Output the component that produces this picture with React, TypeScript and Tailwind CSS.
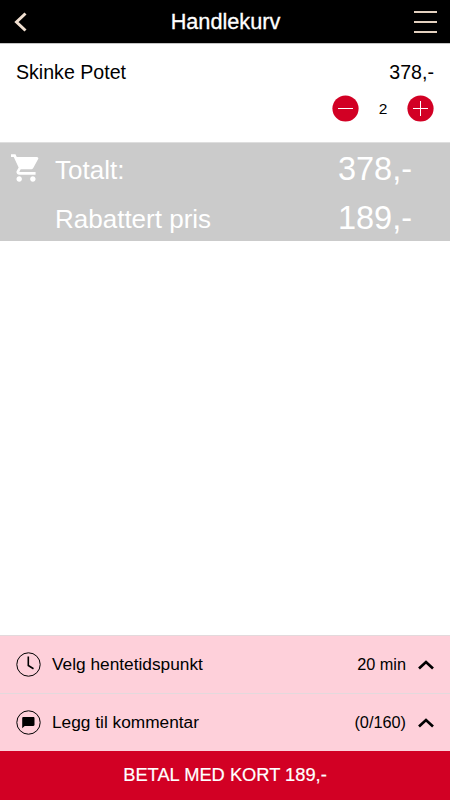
import type { ReactNode } from "react"

type OptionRowProps = {
  icon: ReactNode
  label: string
  value: string
}

const Chevron = () => (
  <svg className="ml-3 h-[10px] w-4" viewBox="0 0 16 10" fill="none">
    <path d="M1 8.5 8 2l7 6.500" stroke="#000" strokeWidth="2.700" />
  </svg>
)

const ClockIcon = () => (
  <svg className="h-[25px] w-[25px]" viewBox="0 0 25 25" fill="none" stroke="#000">
    <circle cx="12.500" cy="12.500" r="11.700" strokeWidth="1" />
    <path d="M12.300 4.500v9l5.200 3.200" strokeWidth="1.600" />
  </svg>
)

const CommentIcon = () => (
  <svg className="h-[25px] w-[25px]" viewBox="0 0 25 25">
    <circle cx="12.500" cy="12.500" r="11.700" fill="none" stroke="#000" />
    <path d="M7.500 7h9.800c.7 0 1.200.5 1.200 1.200v6.600c0 .7-.5 1.200-1.200 1.200H8.700L6.200 18.300V8.200C6.200 7.500 6.700 7 7.500 7z" fill="#000" />
  </svg>
)

const OptionRow = ({ icon, label, value }: OptionRowProps) => (
  <div className="flex h-[58px] items-center border-t border-[#e3d9dc] bg-[#fed0da] pr-4 pl-4">
    {icon}
    <p className="ml-[11px] text-[17.3px]">{label}</p>
    <p className="ml-auto text-[16.3px]">{value}</p>
    <Chevron />
  </div>
)

export default function App() {
  return (
    <div className="flex h-screen flex-col bg-white font-['Liberation_Sans',Arial,sans-serif] leading-none text-black">
      <header className="grid h-[43px] shrink-0 grid-cols-3 items-center bg-black pr-[13px] pl-[14px]">
        <button aria-label="Tilbake">
          <svg className="h-5 w-[13px]" viewBox="0 0 13 20" fill="none">
            <path d="M11.500 1.500 2.500 10l9 8.500" stroke="#f0dfd0" strokeWidth="3" />
          </svg>
        </button>
        <h1 className="text-center text-[21.7px] text-white [-webkit-text-stroke:0.3px_white]">Handlekurv</h1>
        <button aria-label="Meny" className="flex flex-col gap-2 justify-self-end">
          <span className="h-[2px] w-[23px] bg-[#e3d0bf]"></span>
          <span className="h-[2px] w-[23px] bg-[#e3d0bf]"></span>
          <span className="h-[2px] w-[23px] bg-[#e3d0bf]"></span>
        </button>
      </header>

      <section className="h-[99px] shrink-0 border-t border-[#c4c4c4] px-4 pt-[18px]">
        <div className="flex justify-between text-[19.6px] leading-5">
          <p>Skinke Potet</p>
          <p>378,-</p>
        </div>
        <div className="mt-[13px] flex items-center justify-end">
          <button aria-label="Færre">
            <svg className="h-[27px] w-[27px]" viewBox="0 0 27 27">
              <circle cx="13.500" cy="13.500" r="13.100" fill="#d20024" />
              <path d="M6 13.500h15" stroke="#fff" />
            </svg>
          </button>
          <p className="w-12 text-center text-[15.500px]">2</p>
          <button aria-label="Flere">
            <svg className="h-[27px] w-[27px]" viewBox="0 0 27 27">
              <circle cx="13.500" cy="13.500" r="13.100" fill="#d20024" />
              <path d="M6 13.500h15M13.500 6v15" stroke="#fff" />
            </svg>
          </button>
        </div>
      </section>

      <section className="flex h-[99px] shrink-0 border-t border-[#dedede] bg-[#cbcbcb] pr-[38px] pl-[11px] text-white">
        <svg className="mt-[11px] h-7 w-7 shrink-0" viewBox="1 2 20.500 20" fill="#fff">
          <path d="M7 18c-1.100 0-1.990.9-1.990 2S5.900 22 7 22s2-.9 2-2-.9-2-2-2zM1 2v2h2l3.600 7.590-1.350 2.450c-.16.28-.25.61-.25.960 0 1.100.9 2 2 2h12v-2H7.420c-.14 0-.25-.11-.25-.25l.03-.12.9-1.630h7.450c.75 0 1.410-.41 1.750-1.030l3.580-6.490A1.003 1.003 0 0 0 20 4H5.210l-.94-2H1zm16 16c-1.100 0-1.990.9-1.990 2s.89 2 1.990 2 2-.9 2-2-.9-2-2-2z" />
        </svg>
        <div className="ml-4 flex-1 text-[26px]">
          <div className="flex h-[49px] items-center justify-between pt-1">
            <p>Totalt:</p>
            <p className="text-[32.5px]">378,-</p>
          </div>
          <div className="flex h-[49px] items-center justify-between pt-1">
            <p>Rabattert pris</p>
            <p className="text-[32.5px]">189,-</p>
          </div>
        </div>
      </section>

      <footer className="mt-auto">
        <OptionRow icon={<ClockIcon />} label="Velg hentetidspunkt" value="20 min" />
        <OptionRow icon={<CommentIcon />} label="Legg til kommentar" value="(0/160)" />
        <button className="h-[49px] w-full bg-[#d20024] text-[18.3px] text-white [-webkit-text-stroke:0.2px_white]">
          BETAL MED KORT 189,-
        </button>
      </footer>
    </div>
  )
}
